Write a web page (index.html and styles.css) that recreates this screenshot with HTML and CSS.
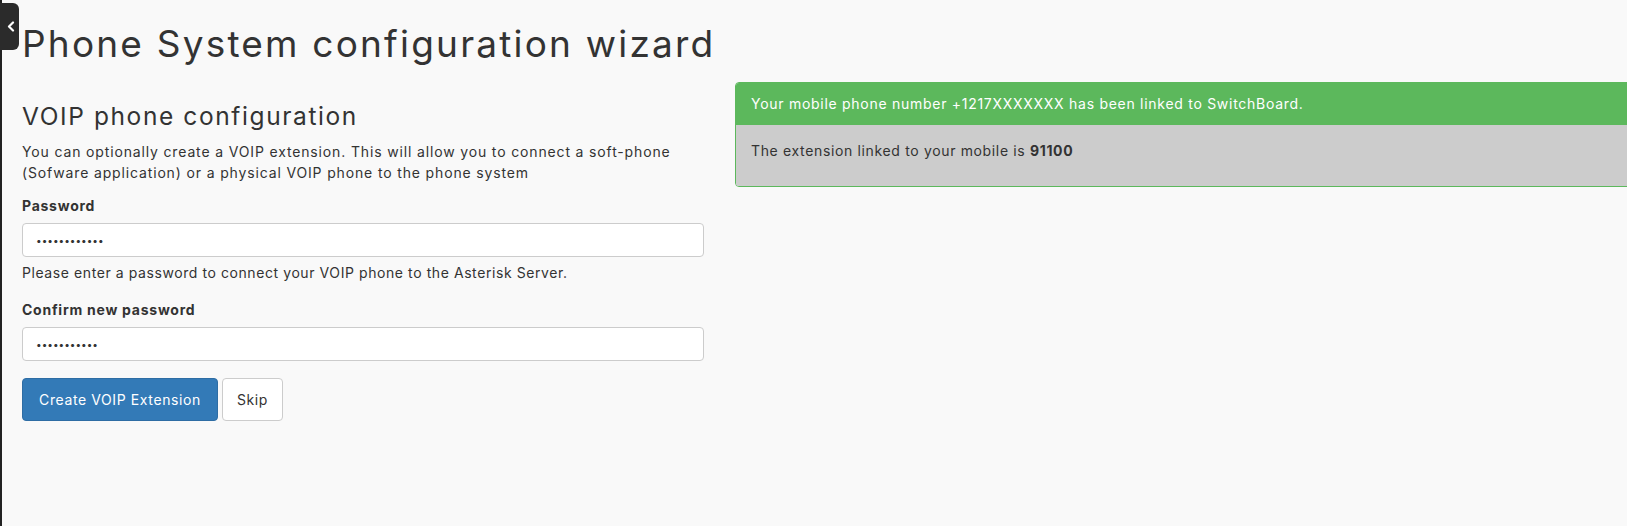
FILE: index.html
```html
<!DOCTYPE html>
<html lang="en">
<head>
<meta charset="utf-8">
<title>Phone System configuration wizard</title>
<link rel="stylesheet" href="styles.css">
</head>
<body>
<div class="shell">
  <button class="sidebar-toggle" type="button" aria-label="Collapse sidebar">
    <svg width="8" height="11" viewBox="0 0 8 11"><polyline points="6,1.5 2,5.5 6,9.5" fill="none" stroke="#fff" stroke-width="2.2" stroke-linecap="round" stroke-linejoin="round"/></svg>
  </button>
  <main class="page">
    <h1 class="page-title">Phone System configuration wizard</h1>
    <div class="columns">
      <section class="col-form">
        <h3 class="section-title">VOIP phone configuration</h3>
        <p class="intro">You can optionally create a VOIP extension. This will allow you to connect a soft-phone (Sofware application) or a physical VOIP phone to the phone system</p>
        <form class="form">
          <div class="field">
            <label class="label" for="pw">Password</label>
            <input class="input" id="pw" type="password" value="abcdefghijkl">
            <p class="help">Please enter a password to connect your VOIP phone to the Asterisk Server.</p>
          </div>
          <div class="field">
            <label class="label" for="pw2">Confirm new password</label>
            <input class="input" id="pw2" type="password" value="abcdefghijk">
          </div>
          <div class="actions">
            <button class="btn btn-primary" type="button">Create VOIP Extension</button>
            <button class="btn btn-default" type="button">Skip</button>
          </div>
        </form>
      </section>
      <section class="col-info">
        <div class="panel">
          <div class="panel-heading">Your mobile phone number +1217XXXXXXX has been linked to SwitchBoard.</div>
          <div class="panel-body">
            <p>The extension linked to your mobile is <strong>91100</strong></p>
          </div>
        </div>
      </section>
    </div>
  </main>
</div>
</body>
</html>
```
FILE: styles.css
```css
* { box-sizing: border-box; }
html, body { margin: 0; padding: 0; }
body {
  background: #f9f9f9;
  color: #333;
  font-family: Inter, "Noto Sans", sans-serif;
  font-size: 14px;
  line-height: 20px;
  letter-spacing: 0.6px;
  overflow: hidden;
}
.shell {
  position: relative;
  min-height: 100vh;
  border-left: 2px solid #222;
}
.sidebar-toggle {
  position: absolute;
  left: -2px;
  top: 3px;
  width: 19px;
  height: 47px;
  padding: 0 0 0 3px;
  border: 0;
  border-radius: 0 6px 6px 0;
  background: #2b2b2b;
  display: flex;
  align-items: center;
  justify-content: center;
}
.page {
  padding: 23px 0 0 20px;
}
.page-title {
  margin: 0;
  font-size: 37px;
  line-height: 41px;
  font-weight: 400;
  letter-spacing: 2.2px;
  color: #333;
}
.columns {
  display: grid;
  grid-template-columns: 682px 1fr;
  column-gap: 31px;
  margin-right: -40px;
}
.section-title {
  margin: 39px 0 0;
  font-size: 24.5px;
  line-height: 27px;
  font-weight: 400;
  letter-spacing: 1.6px;
}
.intro {
  margin: 12px 0 0;
  line-height: 20.5px;
  letter-spacing: 0.85px;
}
.form { margin-top: 13px; }
.field { display: flex; flex-direction: column; margin-bottom: 17px; }
.label {
  font-weight: 700;
  margin-bottom: 7px;
  letter-spacing: 0.75px;
}
.input {
  height: 34px;
  width: 100%;
  padding: 6px 13px;
  border: 1px solid #ccc;
  border-radius: 4px;
  background: #fff;
  color: #333;
  font-family: Inter, "Noto Sans", sans-serif;
  font-size: 10px;
  letter-spacing: 0;
}
.help { margin: 6px 0 0; letter-spacing: 0.58px; }
.actions { display: flex; gap: 4px; margin-top: 0; }
.btn {
  height: 43px;
  padding: 0 16px;
  border-radius: 4px;
  font-family: inherit;
  font-size: 14px;
  letter-spacing: 0.6px;
  cursor: pointer;
}
.btn-primary { background: #337ab7; border: 1px solid #2e6da4; color: #fff; width: 196px; padding: 0; }
.btn-default { background: #fff; border: 1px solid #ccc; color: #333; width: 61px; padding: 0; }
.col-info { padding-top: 18px; }
.panel {
  border: 1px solid #5cb85c;
  border-radius: 4px;
  overflow: hidden;
}
.panel-heading {
  background: #5cb85c;
  color: #fff;
  padding: 11px 15px;
  letter-spacing: 0.72px;
}
.panel-body {
  background: #ccc;
  padding: 16px 15px 15px;
}
.panel-body p { margin: 0 0 10px; letter-spacing: 0.65px; }
.panel-body strong { font-weight: 700; }
```
